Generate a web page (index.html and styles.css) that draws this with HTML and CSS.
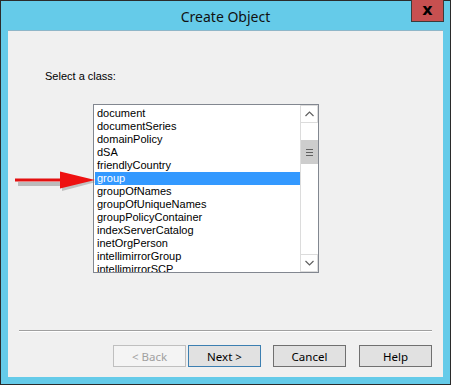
FILE: index.html
```html
<!DOCTYPE html>
<html lang="en">
<head>
    <meta charset="UTF-8">
    <title>Create Object</title>
    <link rel="stylesheet" href="styles.css">
</head>
<body>
    <div class="window">
        <div class="titlebar">
            <span class="title">Create Object</span>
            <div class="close-btn">x</div>
        </div>

        <div class="client">
            <p class="prompt">Select a class:</p>

            <div class="listbox">
                <ul class="items">
                    <li>document</li>
                    <li>documentSeries</li>
                    <li>domainPolicy</li>
                    <li>dSA</li>
                    <li>friendlyCountry</li>
                    <li class="selected">group</li>
                    <li>groupOfNames</li>
                    <li>groupOfUniqueNames</li>
                    <li>groupPolicyContainer</li>
                    <li>indexServerCatalog</li>
                    <li>inetOrgPerson</li>
                    <li>intellimirrorGroup</li>
                    <li>intellimirrorSCP</li>
                </ul>
                <div class="scrollbar">
                    <div class="sb-btn">
                        <svg width="9" height="6" viewBox="0 0 9 6"><path d="M0.5 5 L4.5 1 L8.5 5" fill="none" stroke="#606060" stroke-width="1.2"/></svg>
                    </div>
                    <div class="sb-track">
                        <div class="sb-thumb">
                            <span></span><span></span><span></span>
                        </div>
                    </div>
                    <div class="sb-btn">
                        <svg width="9" height="6" viewBox="0 0 9 6"><path d="M0.5 1 L4.5 5 L8.5 1" fill="none" stroke="#606060" stroke-width="1.2"/></svg>
                    </div>
                </div>
            </div>

            <!-- annotation arrow pointing at the selection -->
            <svg class="arrow" width="90" height="24" viewBox="0 0 90 24">
                <path d="M8 13 L55 13 L55 17 L8 17 Z" fill="#7a7a7a" opacity="0.45"/>
                <path d="M52 6 L86 13 L52 22 Z" fill="#7a7a7a" opacity="0.4"/>
                <path d="M5 9.5 L54 9.5 L54 12.5 L5 12.5 Z" fill="#e31010"/>
                <path d="M50 2.5 L85 11 L50 19.5 Z" fill="#ee1111"/>
            </svg>

            <div class="spacer"></div>
            <hr class="separator">

            <div class="buttons">
                <button class="btn disabled">&lt; Back</button>
                <button class="btn default">Next &gt;</button>
                <button class="btn cancel">Cancel</button>
                <button class="btn">Help</button>
            </div>
        </div>
    </div>
</body>
</html>
```

FILE: styles.css
```css
* {
    margin: 0;
    padding: 0;
    box-sizing: border-box;
}

body {
    width: 451px;
    height: 385px;
    overflow: hidden;
    background: #ffffff;
}

.window {
    position: relative;
    width: 451px;
    height: 385px;
    background: #65cbe9;
    border: 1px solid #2b2b2b;
    display: flex;
    flex-direction: column;
    padding: 0 7px 7px 7px;
}

.titlebar {
    height: 29px;
    display: flex;
    align-items: center;
    justify-content: center;
}

.title {
    font-family: "Noto Sans", "Open Sans", sans-serif;
    font-size: 14px;
    color: #111;
    padding-top: 1px;
}

.close-btn {
    position: absolute;
    top: -1px;
    right: 6px;
    width: 33px;
    height: 22px;
    background: #c75050;
    border: 1px solid #3b3b3b;
    border-top: none;
    color: #000;
    font-family: "DejaVu Sans", sans-serif;
    font-weight: bold;
    font-size: 16px;
    line-height: 19px;
    text-align: center;
}

.client {
    position: relative;
    flex: 1;
    background: #f0f0f0;
    border-top: 1px solid #8fb6c8;
    display: flex;
    flex-direction: column;
    padding: 0 11px 10px 11px;
    font-family: "Liberation Sans", Arial, sans-serif;
}

.prompt {
    font-size: 11px;
    color: #000;
    margin: 39px 0 0 26px;
    line-height: 13px;
}

.listbox {
    margin: 21px 0 0 74px;
    width: 226px;
    height: 169px;
    border: 1px solid #828790;
    background: #fff;
    display: flex;
    overflow: hidden;
}

.items {
    list-style: none;
    flex: 1;
    padding: 2px 0 0 1px;
    font-size: 11px;
    line-height: 13px;
    color: #000;
}

.items li {
    padding-left: 2px;
    height: 13px;
    white-space: nowrap;
}

.items li.selected {
    background: #3399ff;
    color: #fff;
}

.scrollbar {
    width: 18px;
    display: flex;
    flex-direction: column;
    border-left: 1px solid #dcdcdc;
    background: #fff;
}

.sb-btn {
    height: 18px;
    border: 1px solid #dcdcdc;
    border-left: none;
    display: flex;
    align-items: center;
    justify-content: center;
}

.sb-track {
    flex: 1;
    padding-top: 17px;
}

.sb-thumb {
    height: 24px;
    background: #cdcdcd;
    display: flex;
    flex-direction: column;
    align-items: center;
    justify-content: center;
    gap: 2px;
}

.sb-thumb span {
    width: 7px;
    height: 1px;
    background: #606060;
}

.arrow {
    position: absolute;
    left: 2px;
    top: 138px;
}

.spacer {
    flex: 1;
}

.separator {
    border: none;
    border-top: 1px solid #a0a0a0;
    border-bottom: 1px solid #ffffff;
    margin-bottom: 13px;
}

.buttons {
    display: flex;
    justify-content: flex-end;
}

.btn {
    width: 73px;
    height: 22px;
    background: #e1e1e1;
    border: 1px solid #707070;
    font-family: "Noto Sans", "Open Sans", sans-serif;
    font-size: 11.5px;
    color: #000;
    margin-left: 13px;
}

.btn.disabled {
    background: #f4f4f4;
    border-color: #bfbfbf;
    color: #a0a0a0;
}

.btn.default {
    border-color: #3c7fb1;
    margin-left: 2px;
}

.btn.cancel {
    margin-left: 12px;
}
```
